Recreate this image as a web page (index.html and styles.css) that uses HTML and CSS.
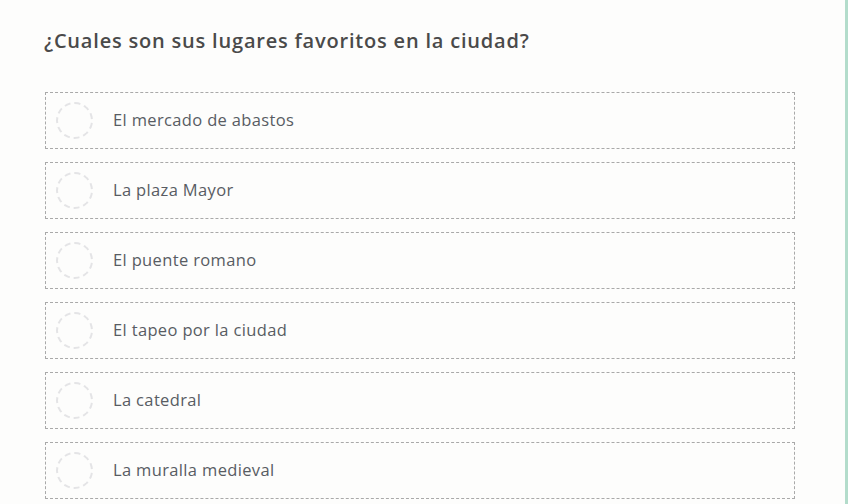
FILE: index.html
```html
<!DOCTYPE html>
<html lang="es">
<head>
<meta charset="utf-8">
<link rel="stylesheet" href="styles.css">
</head>
<body>
<div class="page">
  <main class="survey">
    <h1 class="question">¿Cuales son sus lugares favoritos en la ciudad?</h1>
    <ul class="options">
      <li class="option"><span class="radio"></span><span class="label">El mercado de abastos</span></li>
      <li class="option"><span class="radio"></span><span class="label">La plaza Mayor</span></li>
      <li class="option"><span class="radio"></span><span class="label">El puente romano</span></li>
      <li class="option"><span class="radio"></span><span class="label">El tapeo por la ciudad</span></li>
      <li class="option"><span class="radio"></span><span class="label">La catedral</span></li>
      <li class="option"><span class="radio"></span><span class="label">La muralla medieval</span></li>
    </ul>
  </main>
  <div class="sidebar"></div>
</div>
</body>
</html>
```
FILE: styles.css
```css
html, body {
  margin: 0;
  padding: 0;
  height: 100%;
  overflow: hidden;
}
body {
  background: #fdfdfc;
  font-family: "Open Sans", Lato, sans-serif;
}
.page {
  display: flex;
  height: 100%;
}
.survey {
  flex: 1;
  padding: 27px 0 0 45px;
}
.sidebar {
  width: 3px;
  background: #b3dccb;
}
.question {
  margin: 0 0 37px -1px;
  font-size: 20px;
  font-weight: 600;
  letter-spacing: 0.8px;
  color: #4a4a4a;
  line-height: 28px;
}
.options {
  list-style: none;
  margin: 0;
  padding: 0;
  width: 750px;
  display: flex;
  flex-direction: column;
  gap: 13px;
}
.option {
  box-sizing: border-box;
  height: 57px;
  border: 1px dashed #a9a9a9;
  display: flex;
  align-items: center;
  padding-left: 10px;
}
.radio {
  box-sizing: border-box;
  width: 37px;
  height: 37px;
  border: 2px dashed #e4e4e6;
  border-radius: 50%;
  flex: none;
}
.label {
  margin-left: 20px;
  padding-bottom: 2px;
  font-size: 16.5px;
  letter-spacing: 0.35px;
  color: #585c63;
}
```
